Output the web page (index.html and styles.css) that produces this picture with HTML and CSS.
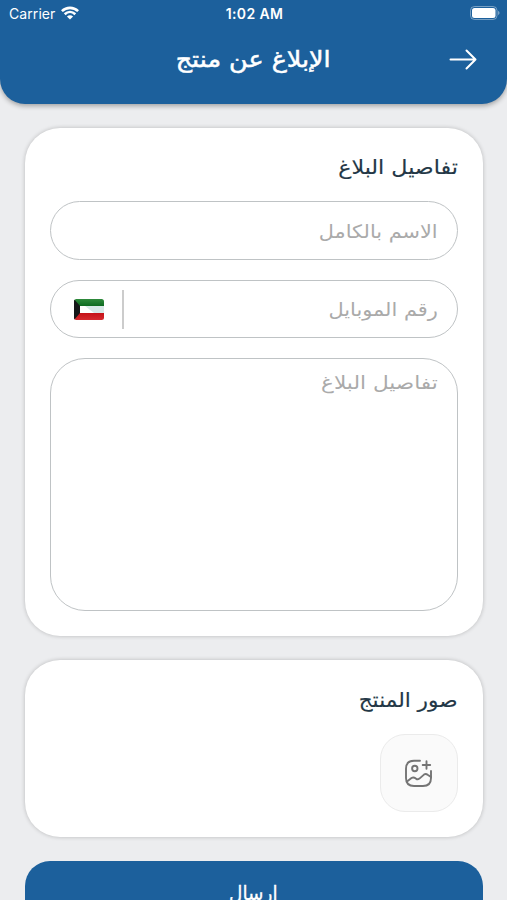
FILE: index.html
```html
<!DOCTYPE html>
<html lang="ar" dir="rtl">
<head>
<meta charset="utf-8">
<title>الإبلاغ عن منتج</title>
<link rel="stylesheet" href="styles.css">
</head>
<body>
<header class="header">
  <div class="status" dir="ltr">
    <div class="carrier"><span>Carrier</span>
      <svg width="18" height="14" viewBox="0 0 18 14" fill="none" stroke="#fff" stroke-width="2.6"><path d="M.9 5.1C5.500.8 12.500.8 17.100 5.100"/><path d="M3.700 8.200C6.900 5.200 11.100 5.200 14.300 8.200"/><path d="M9 13.600 5.900 10.500Q9 7.900 12.100 10.500Z" fill="#fff" stroke="none"/></svg>
    </div>
    <span class="clock">1:02 AM</span>
    <svg class="battery" width="30" height="14" viewBox="0 0 30 14"><rect x=".5" y=".5" width="26.500" height="13" rx="4" fill="none" stroke="#fff" stroke-opacity=".4"/><rect x="2" y="2" width="23.500" height="10" rx="2.500" fill="#fff"/><path d="M28.200 4.800Q30.800 7 28.200 9.200Z" fill="#fff" fill-opacity=".5"/></svg>
  </div>
  <div class="nav">
    <svg class="back" width="28" height="22" viewBox="0 0 28 22" fill="none" stroke="#fff" stroke-width="2" stroke-linecap="round" stroke-linejoin="round"><path d="M1.500 11.500H26.500M17.500 2.500l9 9-9 9"/></svg>
    <h1 class="title"><span class="t-title">الإبلاغ عن منتج</span></h1>
  </div>
</header>
<main class="content">
  <section class="card details">
    <h2 class="heading"><span class="t-details">تفاصيل البلاغ</span></h2>
    <div class="field name"><span class="t-name">الاسم بالكامل</span></div>
    <div class="field phone"><span class="t-phone">رقم الموبايل</span>
      <div class="country">
        <svg width="30" height="21" viewBox="0 0 30 21"><defs><clipPath id="flag"><rect width="30" height="21" rx="2.500"/></clipPath><linearGradient id="green" x2="0" y2="1"><stop stop-color="#2f8a3c"/><stop offset="1" stop-color="#0d6b20"/></linearGradient><linearGradient id="red" x2="0" y2="1"><stop stop-color="#c51217"/><stop offset="1" stop-color="#d52b30"/></linearGradient></defs><g clip-path="url(#flag)"><path fill="#fff" d="M0 0h30v21H0z"/><path fill="#d7e9e7" d="M11 7h19v7H20z"/><path fill="url(#green)" d="M0 0h30v7H0z"/><path fill="url(#red)" d="M0 14h30v7H0z"/><path fill="#151719" d="M0 0 6 7v7L0 21z"/></g></svg>
      </div>
    </div>
    <div class="field area"><span class="t-area">تفاصيل البلاغ</span></div>
  </section>
  <section class="card photos">
    <h2 class="heading"><span class="t-photos">صور المنتج</span></h2>
    <div class="upload">
      <svg width="30" height="30" viewBox="0 0 30 30" fill="none" stroke="#747474" stroke-width="1.900" stroke-linecap="round" stroke-linejoin="round"><path d="M16 2.800H10Q2 2.800 2 10.800V20Q2 28 10 28H19Q27 28 27 20V13"/><circle cx="10.800" cy="10.500" r="2.700"/><path d="M22.500 3.300v7.500M18.700 7h7.500M3 23.500l4.500-3.500q2-1.300 4 .3l.7.600q1.500 1 3.200-.300l4.600-4q1.800-1.400 3.600.100L27 19"/></svg>
    </div>
  </section>
  <div class="submit"><span class="t-send">ارسال</span></div>
</main>
</body>
</html>
```
FILE: styles.css
```css
* { box-sizing: border-box; }
body { margin: 0; height: 900px; overflow: hidden; background: #ecedef; font-family: "DejaVu Sans", sans-serif; color: #233746; }
svg { display: block; flex: none; }
h1, h2 { margin: 0; font-weight: 400; }
span { display: inline-block; white-space: nowrap; transform-origin: right center; }
.header { height: 103.5px; background: #1c609c; border-radius: 0 0 25px 25px; box-shadow: 0 2px 5px rgba(0,0,0,.32); color: #fff; }
.status { height: 26px; padding: 0 7px 0 9px; display: grid; grid-template-columns: 1fr auto 1fr; align-items: center; font: 14px Inter, sans-serif; }
.carrier { display: flex; align-items: center; gap: 6px; letter-spacing: .08px; }
.clock { font-weight: 600; font-size: 14px; letter-spacing: .35px; }
.battery { justify-self: end; }
.nav { height: 66px; padding: 0 30px; display: grid; grid-template-columns: 28px 1fr 28px; align-items: center; }
.title { font-size: 23px; line-height: 40px; text-align: center; -webkit-text-stroke: .5px; }
.content { padding: 24px 24.5px 0 25px; display: flex; flex-direction: column; gap: 24px; }
.card { background: #fff; border-radius: 35px; padding: 24px 25px; box-shadow: 0 0 4px rgba(0,0,0,.22); }
.details { height: 508.5px; display: flex; flex-direction: column; gap: 20px; }
.heading { font-size: 20px; line-height: 30px; height: 30px; -webkit-text-stroke: .15px; }
.field { height: 58px; flex: none; border: 1.5px solid #bfc3c5; border-radius: 30px; padding: 1px 19px 0; display: flex; align-items: center; justify-content: space-between; font-size: 18.5px; color: #aaa; }
.details .heading { margin-bottom: -.3px; }
.name { height: 59px; }
.country { height: 39px; display: flex; align-items: center; width: 54px; border-right: 2px solid #ccc; justify-content: flex-end; padding-left: 4px; margin-top: -1px; }
.area { height: 253px; border-radius: 35px; align-items: flex-start; padding-top: 9px; line-height: 30px; }
.photos { height: 176.5px; }
.photos .heading { padding-top: 1px; }
.upload { width: 78px; height: 78px; margin-top: 20px; border: 1.5px solid #ebebeb; border-radius: 25px; background: #fafafa; display: flex; align-items: center; justify-content: center; }
.submit { height: 64px; flex: none; border-radius: 25px; background: #1c609c; color: #fff; font-size: 20px; display: flex; justify-content: center; align-items: center; -webkit-text-stroke: .3px; }
.t-title { transform: scaleX(1.105); transform-origin: center; }
.t-details { transform: scaleX(1.11); }
.t-name { transform: scaleX(1.125); }
.t-phone { transform: scaleX(1.13); }
.t-area { transform: scaleX(1.17); }
.t-photos { transform: scaleX(1.08); }
.t-send { transform: scaleX(.92); transform-origin: center; }
```
